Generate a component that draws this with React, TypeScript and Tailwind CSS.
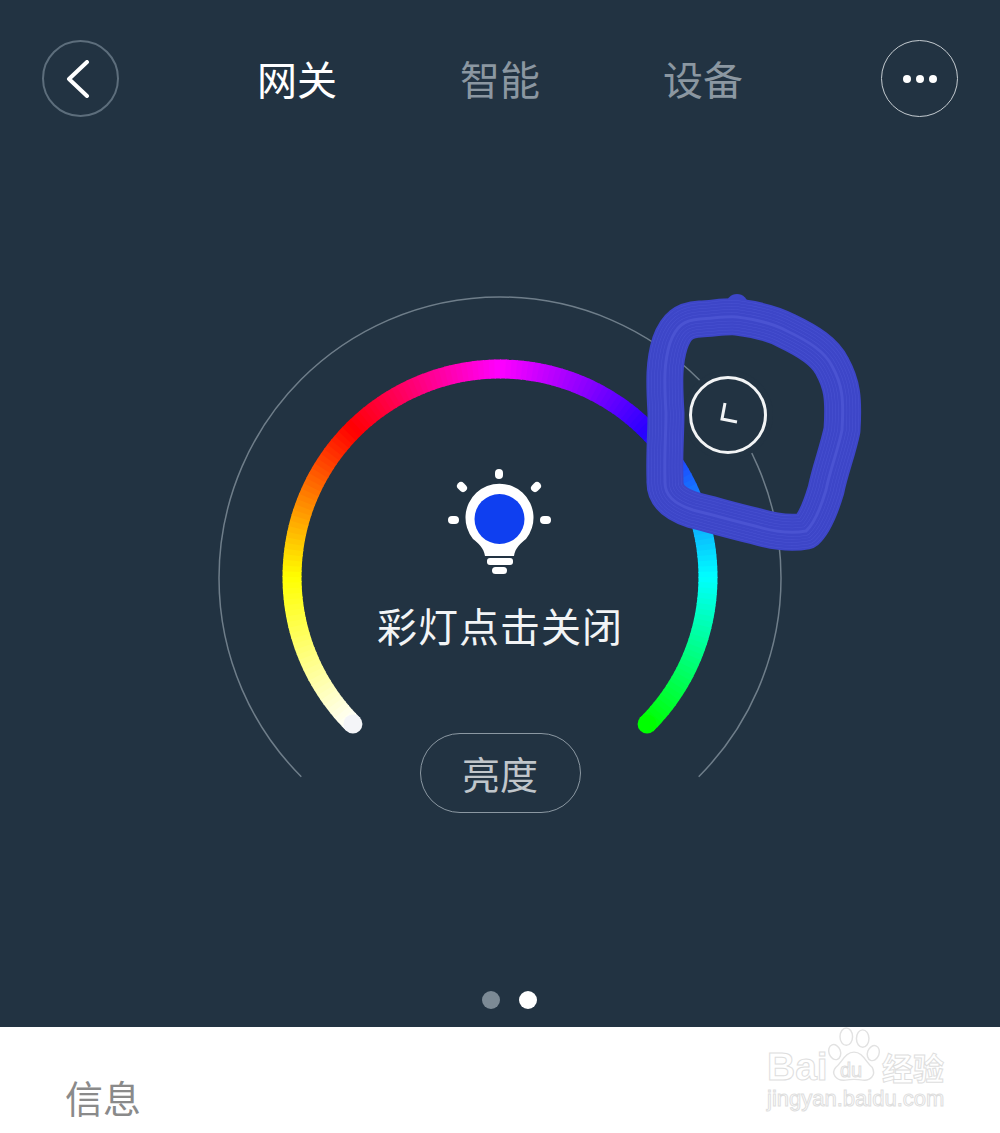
const CJK = "font-['Noto_Sans_CJK_SC','Noto_Sans',sans-serif]";

const CX = 500;
const CY = 577;
const STOPS: [number, number, number][] = [
  [255, 255, 255],
  [255, 255, 0],
  [255, 0, 0],
  [255, 0, 255],
  [40, 0, 255],
  [0, 255, 255],
  [0, 255, 0],
];

function point(deg: number, r: number, cy = CY): [number, number] {
  const a = (deg * Math.PI) / 180;
  return [CX + r * Math.sin(a), cy - r * Math.cos(a)];
}

function colorAt(deg: number): string {
  const t = ((deg + 135) / 270) * (STOPS.length - 1);
  const i = Math.min(Math.floor(t), STOPS.length - 2);
  const f = t - i;
  const c = STOPS[i].map((v, k) => Math.round(v + (STOPS[i + 1][k] - v) * f));
  return `rgb(${c[0]},${c[1]},${c[2]})`;
}

const SEGMENTS = Array.from({ length: 180 }, (_, i) => {
  const from = -135 + i * 1.5;
  const [x1, y1] = point(from, 208);
  const [x2, y2] = point(from + 1.8, 208);
  return { d: `M${x1} ${y1}L${x2} ${y2}`, color: colorAt(from + 0.75) };
});

const RING_START = point(-135, 281, 578);
const RING_END = point(135, 281, 578);
const RING = `M${RING_START[0]} ${RING_START[1]}A281 281 0 1 1 ${RING_END[0]} ${RING_END[1]}`;

// hand-drawn marker loop around the timer button
const SCRIBBLE =
  'M666 413C664 380 664 362 670 343C676 326 684 320 700 319C716 318 728 316 737 317C760 320 778 326 787 331C810 342 825 352 832 366C842 384 844 398 842 430C838 450 830 470 826 490C820 510 814 524 806 531C790 534 775 532 755 526C730 520 710 514 693 510C675 504 664 496 665 480C664 455 666 435 666 413Z';

// the marker's passes show as lines running along the stroke
const SCRIBBLE_PASSES = [37, 33, 32, 27, 26, 21, 20, 15, 14, 9, 8, 3];

function Gauge() {
  return (
    <svg className="absolute inset-0 h-full w-full" viewBox="170 280 660 560" fill="none" overflow="visible">
      <path d={RING} stroke="#6f7e8a" strokeWidth="1.5" />
      {SEGMENTS.map((s, i) => (
        <path key={i} d={s.d} stroke={s.color} strokeWidth="19" />
      ))}
      <circle cx={point(-135, 208)[0]} cy={point(-135, 208)[1]} r="9.5" fill="#f4f5f8" />
      <circle cx={point(135, 208)[0]} cy={point(135, 208)[1]} r="9.5" fill="#00ff00" />
      <circle cx="728" cy="415" r="45" fill="#223342" />
      <circle cx="728" cy="415" r="37.5" stroke="#f2f4f5" strokeWidth="3" />
      <path d="M725 403L722 419L737 422" stroke="#f2f4f5" strokeWidth="3" />
      <circle cx="737" cy="305" r="11" fill="#3d46c8" />
      {SCRIBBLE_PASSES.map((w, i) => (
        <path key={w} d={SCRIBBLE} stroke={i % 2 === 0 ? '#3d46c8' : '#4a53d2'} strokeWidth={w} strokeLinejoin="round" />
      ))}
    </svg>
  );
}

function Lamp() {
  return (
    <svg className="h-[110px] w-[104px]" viewBox="448 466 104 110" fill="none">
      <path
        d="M485 556C484 548 478 543 473 539A34 34 0 1 1 526 539C521 543 515 548 514 556Z"
        fill="#fff"
      />
      <circle cx="499.500" cy="519" r="25" fill="#0f3ff0" />
      <rect x="487" y="558" width="26" height="7" rx="3" fill="#fff" />
      <rect x="492" y="567" width="15" height="7" rx="3.500" fill="#fff" />
      <g stroke="#fff" strokeWidth="8" strokeLinecap="round">
        <path d="M499 473V475" />
        <path d="M461 486L463 488" />
        <path d="M537 486L535 488" />
        <path d="M452 520H455" />
        <path d="M544 520H547" />
      </g>
    </svg>
  );
}

function Paw() {
  return (
    <svg className="absolute left-[60px] top-0 h-[56px] w-[54px]" viewBox="0 0 54 58" fill="none" stroke="#e2e2e2" strokeWidth="1.500">
      <ellipse cx="19" cy="10" rx="6.500" ry="9" />
      <ellipse cx="36" cy="12" rx="6.500" ry="9" />
      <ellipse cx="7" cy="26" rx="6" ry="8" transform="rotate(-20 7 26)" />
      <ellipse cx="47" cy="27" rx="6" ry="8" transform="rotate(20 47 27)" />
      <path d="M27 26C36 26 39 36 46 42C50 50 44 56 36 55C30 54 24 54 18 55C8 56 3 48 8 42C15 36 18 26 27 26Z" />
    </svg>
  );
}

export default function App() {
  return (
    <div className={`flex h-[1133px] w-[1000px] flex-col overflow-hidden bg-white ${CJK}`}>
      <div className="flex h-[1027px] flex-col items-center bg-[#223342]">
        <header className="flex w-full items-center justify-between px-[42px] pt-[40px]">
          <button className="flex h-[77px] w-[77px] items-center justify-center rounded-full border-2 border-[#5d6e7c]">
            <svg className="mr-[5px] h-[38px] w-[24px]" viewBox="0 0 24 38" fill="none" stroke="#fff" strokeWidth="4" strokeLinecap="round" strokeLinejoin="round">
              <path d="M21 2L3 19L21 36" />
            </svg>
          </button>
          <nav className="flex gap-[123px] text-[40px] leading-[77px] tracking-[0px]">
            <span className="text-white">网关</span>
            <span className="text-[#8b97a1]">智能</span>
            <span className="text-[#8b97a1]">设备</span>
          </nav>
          <button className="flex h-[77px] w-[77px] items-center justify-center gap-[5px] rounded-full border border-[#c4cbd0]">
            <i className="h-[8px] w-[8px] rounded-full bg-white" />
            <i className="h-[8px] w-[8px] rounded-full bg-white" />
            <i className="h-[8px] w-[8px] rounded-full bg-white" />
          </button>
        </header>

        <section className="relative mt-[163px] h-[560px] w-[660px]">
          <Gauge />
          <div className="relative flex flex-col items-center pt-[186px]">
            <Lamp />
            <p className="mt-[22px] text-[40px] leading-[54px] tracking-[1px] text-[#f2f4f5]">彩灯点击关闭</p>
            <button className="mt-[81px] h-[80px] w-[161px] rounded-[40px] border border-[#8b98a2] text-[38px] leading-none text-[#c0c6cb]">
              亮度
            </button>
          </div>
        </section>

        <div className="ml-[18px] mt-[151px] flex gap-[19px]">
          <i className="h-[18px] w-[18px] rounded-full bg-[#7c8a95]" />
          <i className="h-[18px] w-[18px] rounded-full bg-white" />
        </div>
      </div>

      <div className="relative flex-1 pl-[65px] pt-[47px]">
        <p className="text-[38px] leading-[46px] text-[#8a8a8a]">信息</p>
        <div className="absolute left-[767px] top-0 h-[106px] w-[180px] text-transparent [-webkit-text-stroke:1px_#dedede]">
          <span className="absolute left-0 top-[22px] font-['Liberation_Sans',sans-serif] text-[39px] font-bold leading-[36px]">Bai</span>
          <Paw />
          <span className="absolute left-[73px] top-[33px] font-['Liberation_Sans',sans-serif] text-[20px] leading-[20px]">du</span>
          <span className="absolute left-[115px] top-[23px] text-[31px] font-bold leading-[34px]">经验</span>
          <span className="absolute left-0 top-[60px] font-['Liberation_Sans',sans-serif] text-[22px] leading-[24px]">jingyan.baidu.com</span>
        </div>
      </div>
    </div>
  );
}
